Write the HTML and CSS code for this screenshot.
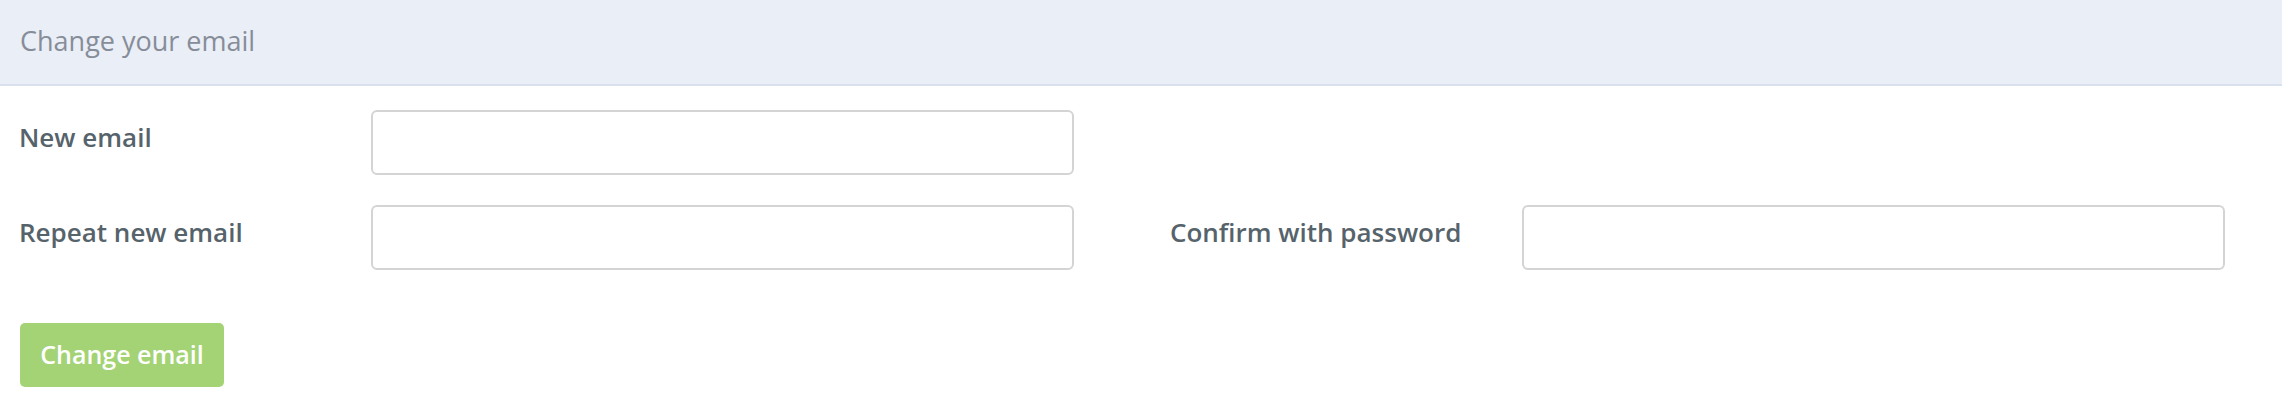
FILE: index.html
```html
<!DOCTYPE html>
<html lang="en">
<head>
<meta charset="utf-8">
<title>Change your email</title>
<link rel="stylesheet" href="styles.css">
</head>
<body>
<section class="panel">
  <header class="panel-heading">Change your email</header>
  <form class="panel-body">
    <div class="form-row">
      <div class="field">
        <label class="field-label" for="new-email">New email</label>
        <input class="field-input" id="new-email" type="email">
      </div>
    </div>
    <div class="form-row">
      <div class="field">
        <label class="field-label" for="repeat-email">Repeat new email</label>
        <input class="field-input" id="repeat-email" type="email">
      </div>
      <div class="field field-second">
        <label class="field-label" for="password">Confirm with password</label>
        <input class="field-input" id="password" type="password">
      </div>
    </div>
    <div class="actions">
      <button class="btn-submit" type="button">Change email</button>
    </div>
  </form>
</section>
</body>
</html>
```
FILE: styles.css
```css
html, body {
  margin: 0;
  padding: 0;
  background: #ffffff;
}

body {
  font-family: "Open Sans", "Lato", "Liberation Sans", sans-serif;
}

.panel {
  width: 2282px;
}

.panel-heading {
  height: 84px;
  line-height: 82px;
  padding: 0 0 0 20px;
  background: #eaeef7;
  border-bottom: 2px solid #d9e1ee;
  color: #878d98;
  font-size: 27px;
  font-weight: 500;
}

.panel-body {
  padding: 24px 0 0 19px;
  margin: 0;
}

.form-row {
  display: flex;
  margin-bottom: 30px;
}

.field {
  display: flex;
  align-items: center;
  width: 1055px;
}

.field-second {
  margin-left: 96px;
}

.field-label {
  width: 352px;
  flex: none;
  color: #56636b;
  font-size: 26px;
  font-weight: 600;
  line-height: 36px;
  margin-top: -11px;
}

.field-input {
  box-sizing: border-box;
  width: 703px;
  height: 65px;
  margin: 0;
  border: 2px solid #d4d4d4;
  border-radius: 6px;
  background: #ffffff;
  outline: none;
}

.actions {
  padding-top: 23px;
}

.btn-submit {
  box-sizing: border-box;
  width: 204px;
  height: 64px;
  padding: 0 0 2px;
  border: none;
  border-radius: 5px;
  background: #a3d374;
  color: #ffffff;
  font-family: "Open Sans", "Lato", "Liberation Sans", sans-serif;
  font-size: 25px;
  font-weight: 600;
  margin-left: 1px;
}
```
